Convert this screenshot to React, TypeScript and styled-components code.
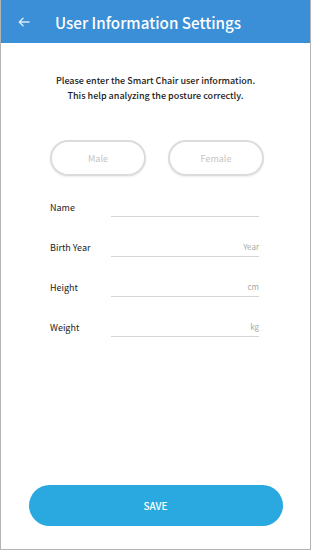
import React from "react";
import styled, { createGlobalStyle } from "styled-components";

const GlobalStyle = createGlobalStyle`
  html, body {
    margin: 0;
    padding: 0;
    background: #ffffff;
  }
  body {
    font-family: "Noto Sans CJK KR", "Noto Sans", sans-serif;
  }
  * {
    box-sizing: border-box;
  }
`;

const Frame = styled.div`
  width: 311px;
  height: 550px;
  display: flex;
  flex-direction: column;
  background: #fff;
  border: 1px solid #b3b3b3;
  border-top: none;
  overflow: hidden;
`;

const Header = styled.header`
  height: 43px;
  margin: 0 -1px;
  background: #3a8fd6;
  display: flex;
  align-items: center;
  padding-left: 17px;
  flex-shrink: 0;
`;

const BackButton = styled.button`
  width: 14px;
  height: 14px;
  padding: 0;
  border: none;
  background: none;
  display: flex;
  align-items: center;
  justify-content: center;
  opacity: 0.8;
`;

const Title = styled.h1`
  margin: 0 0 0 24px;
  color: #fff;
  font-family: "Noto Sans CJK KR", "Noto Sans", sans-serif;
  font-size: 15.2px;
  font-weight: 500;
  line-height: 20px;
`;

const Body = styled.main`
  flex: 1;
  display: flex;
  flex-direction: column;
  padding: 30px 0 23px;
`;

const Intro = styled.p`
  margin: 0;
  text-align: center;
  font-size: 9px;
  line-height: 15px;
  font-weight: 500;
  color: #222;
`;

const GenderRow = styled.div`
  display: flex;
  gap: 22px;
  padding-left: 49px;
  margin-top: 37px;
`;

const GenderButton = styled.button`
  width: 96px;
  height: 36px;
  border-radius: 18px;
  border: 2px solid #dcdcdc;
  background: #fff;
  color: #c4c4c4;
  font-family: "Noto Sans CJK KR", "Noto Sans", sans-serif;
  font-size: 9px;
  box-shadow: 0 1px 2px rgba(0, 0, 0, 0.08);
`;

const Form = styled.div`
  display: flex;
  flex-direction: column;
  gap: 26px;
  margin-top: 25px;
  padding: 0 51px 0 49px;
`;

const Row = styled.label`
  display: flex;
  align-items: flex-end;
  height: 14px;
`;

const Label = styled.span`
  width: 61px;
  font-size: 9px;
  line-height: 14px;
  color: #222;
`;

const Field = styled.div`
  flex: 1;
  height: 16px;
  margin-bottom: -2px;
  border-bottom: 1.5px solid #d6d6d6;
  display: flex;
  align-items: flex-start;
  justify-content: flex-end;
`;

const Unit = styled.span`
  font-size: 8px;
  line-height: 12px;
  color: #a8a8a8;
`;

const Spacer = styled.div`
  flex: 1;
`;

const SaveButton = styled.button`
  align-self: center;
  width: 254px;
  height: 41px;
  border: none;
  border-radius: 21px;
  background: #2aa9e0;
  color: #fff;
  font-family: "Noto Sans CJK KR", "Noto Sans", sans-serif;
  font-size: 10px;
  font-weight: 500;
`;

const fields = [
  { label: "Name", unit: "" },
  { label: "Birth Year", unit: "Year" },
  { label: "Height", unit: "cm" },
  { label: "Weight", unit: "kg" },
];

export default function App() {
  return (
    <>
      <GlobalStyle />
      <Frame>
        <Header>
          <BackButton aria-label="back">
            <svg width="12" height="10" viewBox="0 0 12 10">
              <path
                d="M11 5H1.5M5 1.3L1.3 5 5 8.7"
                fill="none"
                stroke="#fff"
                strokeWidth="1.5"
                strokeLinecap="round"
                strokeLinejoin="round"
              />
            </svg>
          </BackButton>
          <Title>User Information Settings</Title>
        </Header>
        <Body>
          <Intro>
            Please enter the Smart Chair user information.
            <br />
            This help analyzing the posture correctly.
          </Intro>
          <GenderRow>
            <GenderButton>Male</GenderButton>
            <GenderButton>Female</GenderButton>
          </GenderRow>
          <Form>
            {fields.map((f) => (
              <Row key={f.label}>
                <Label>{f.label}</Label>
                <Field>
                  <Unit>{f.unit}</Unit>
                </Field>
              </Row>
            ))}
          </Form>
          <Spacer />
          <SaveButton>SAVE</SaveButton>
        </Body>
      </Frame>
    </>
  );
}
